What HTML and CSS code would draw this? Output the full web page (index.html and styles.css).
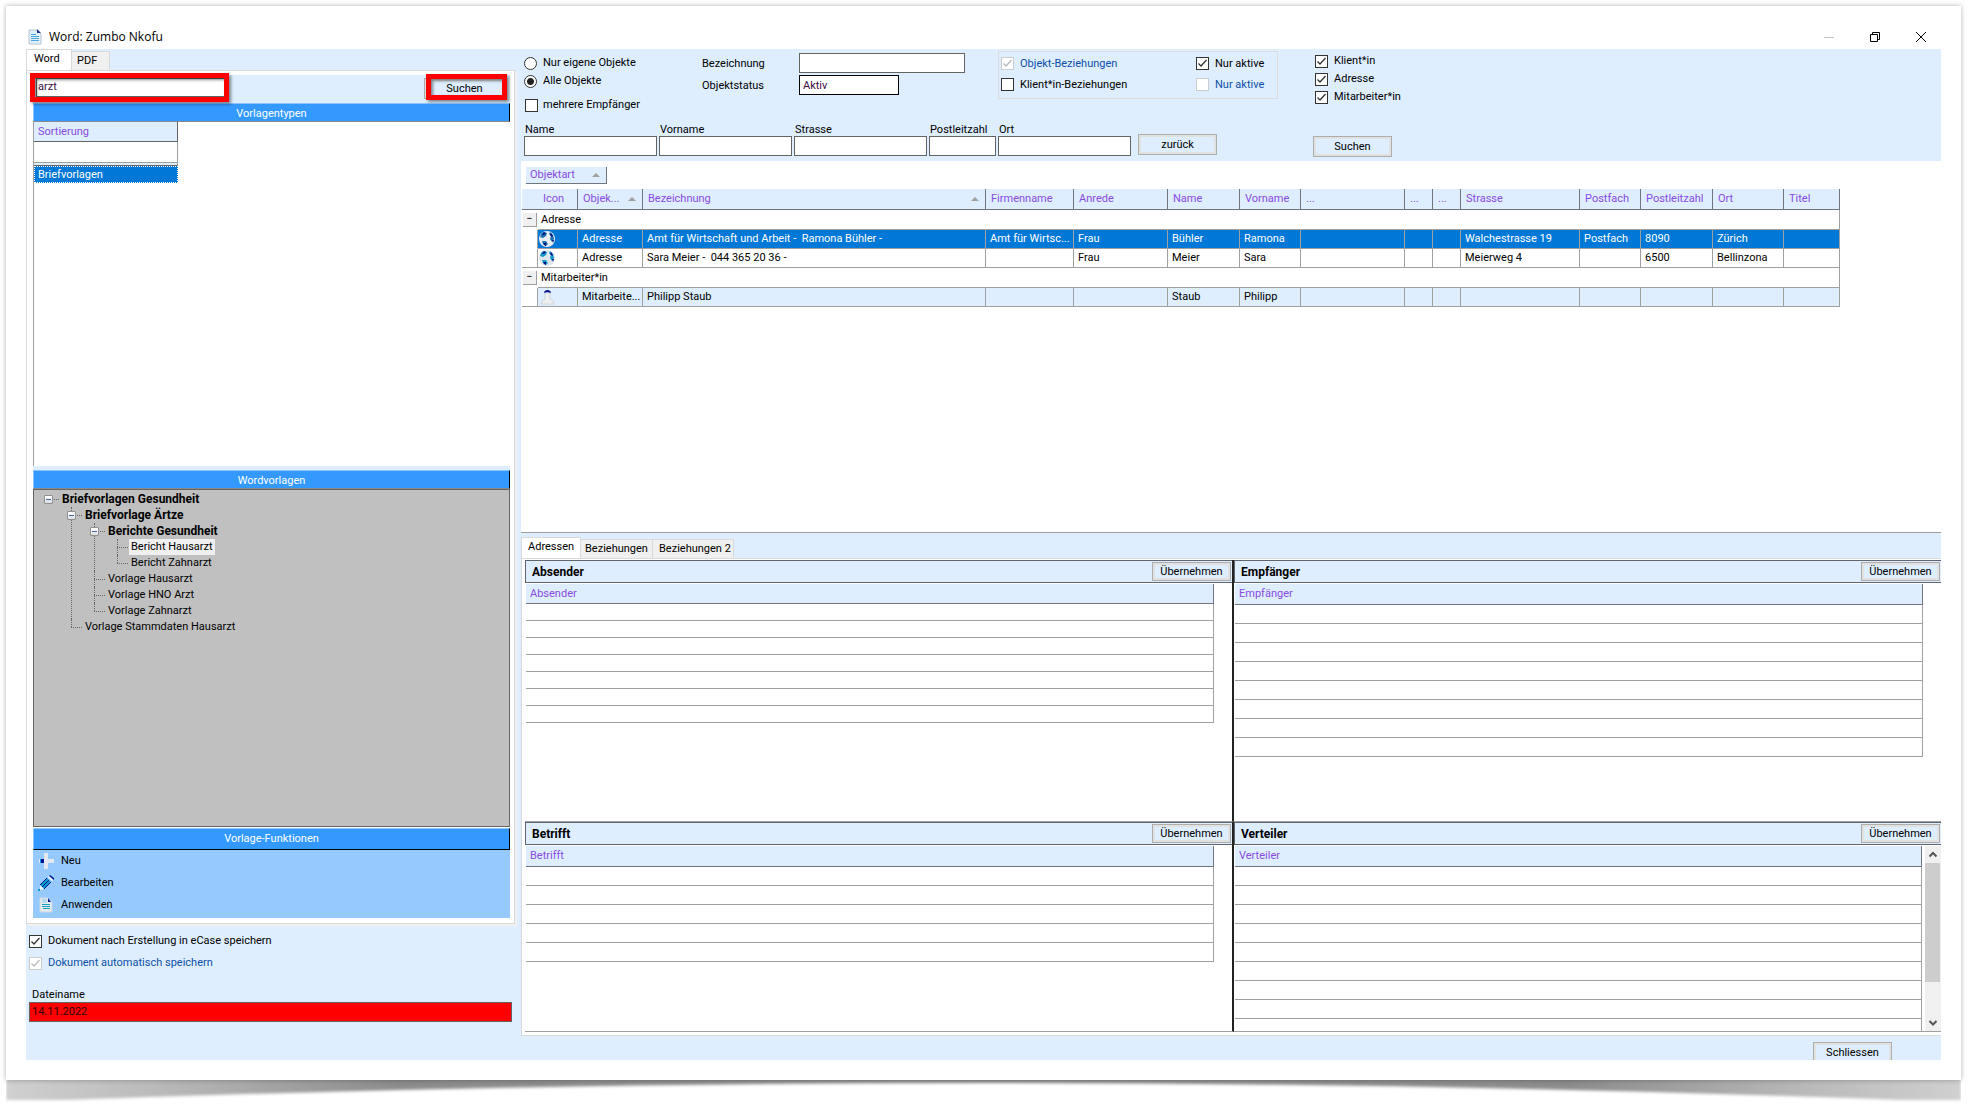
FILE: index.html
```html
<!DOCTYPE html>
<html lang="de">
<head>
<meta charset="utf-8">
<title>Word: Zumbo Nkofu</title>
<link rel="stylesheet" href="styles.css">
</head>
<body>
<div class="paper">
  <svg class="curl" viewBox="0 0 1955 28" preserveAspectRatio="none" aria-hidden="true">
    <defs>
      <linearGradient id="curl-fill" x1="0" x2="1" y1="0" y2="0">
        <stop offset="0" stop-color="#d0d0d0"/>
        <stop offset="0.07" stop-color="#bcbcbc"/>
        <stop offset="0.2" stop-color="#8c8c8c"/>
        <stop offset="0.5" stop-color="#909090"/>
        <stop offset="0.8" stop-color="#8c8c8c"/>
        <stop offset="0.93" stop-color="#bcbcbc"/>
        <stop offset="1" stop-color="#d0d0d0"/>
      </linearGradient>
      <filter id="curl-blur" x="-1%" width="102%" y="-50%" height="200%"><feGaussianBlur stdDeviation="1.5"/></filter>
    </defs>
    <path d="M0-10H1955V20H1895Q977-14 60 20H0Z" fill="url(#curl-fill)" filter="url(#curl-blur)"/>
  </svg>
  <div class="window">
    <header class="titlebar">
      <svg class="app-icon" width="14" height="16" viewBox="0 0 14 16"><path d="M1 1h8l4 4v10H1z" fill="#dff0fb" stroke="#b5c3cf"/><path d="M9 0l4 4H9z" fill="#1a2f8f"/><path d="M3 5.500h5M3 7.500h8M3 9.500h8M3 11.500h8" stroke="#4aa5dc"/></svg>
      <h1 class="title">Word: Zumbo Nkofu</h1>
      <div class="window-buttons">
        <button class="win-btn" aria-label="Minimieren"><svg width="12" height="12" viewBox="0 0 12 12"><path d="M1 6.500h10" stroke="#c4c4c4"/></svg></button>
        <button class="win-btn" aria-label="Wiederherstellen"><svg width="12" height="12" viewBox="0 0 12 12"><path d="M1.500 3.500h7v7h-7zM3.500 3.500v-2h7v7h-2" fill="none" stroke="#000"/></svg></button>
        <button class="win-btn" aria-label="Schliessen"><svg width="12" height="12" viewBox="0 0 12 12"><path d="M1 1l10 10M11 1L1 11" stroke="#000"/></svg></button>
      </div>
    </header>

    <div class="content">
      <aside class="sidebar">
        <div class="tabs" role="tablist">
          <button class="tab tab-active" role="tab">Word</button>
          <button class="tab" role="tab">PDF</button>
        </div>
        <div class="template-panel">
          <div class="search">
            <input class="field search-field" type="text" value="arzt" aria-label="Vorlage suchen">
            <button class="btn search-btn">Suchen</button>
            <span class="mark mark-field"></span>
            <span class="mark mark-btn"></span>
          </div>
          <h2 class="bar">Vorlagentypen</h2>
          <div class="types">
            <table class="types-table">
              <thead><tr><th>Sortierung</th></tr></thead>
              <tbody>
                <tr class="types-filter"><td></td></tr>
                <tr class="types-selected"><td>Briefvorlagen</td></tr>
              </tbody>
            </table>
          </div>
          <div class="splitter"></div>
          <h2 class="bar">Wordvorlagen</h2>
          <div class="tree">
            <ul class="tree-root">
              <li><span class="toggle"></span><span class="node node-bold">Briefvorlagen Gesundheit</span>
                <ul>
                  <li><span class="toggle"></span><span class="node node-bold">Briefvorlage Ärtze</span>
                    <ul>
                      <li><span class="toggle"></span><span class="node node-bold">Berichte Gesundheit</span>
                        <ul>
                          <li><span class="node node-selected">Bericht Hausarzt</span></li>
                          <li><span class="node">Bericht Zahnarzt</span></li>
                        </ul>
                      </li>
                      <li><span class="node">Vorlage Hausarzt</span></li>
                      <li><span class="node">Vorlage HNO Arzt</span></li>
                      <li><span class="node">Vorlage Zahnarzt</span></li>
                    </ul>
                  </li>
                  <li><span class="node">Vorlage Stammdaten Hausarzt</span></li>
                </ul>
              </li>
            </ul>
          </div>
          <h2 class="bar bar-functions">Vorlage-Funktionen</h2>
          <div class="functions">
            <button class="function"><svg width="16" height="16" viewBox="0 0 16 16"><path d="M6 0h4v6h6v4h-6v6H6v-6H1V6h5z" fill="#e3e8f0"/><path d="M2 6h2v4H2z" fill="#0a9bd0"/><path d="M3 6h3v4H3z" fill="#00109a"/></svg>Neu</button>
            <button class="function"><svg width="16" height="16" viewBox="0 0 16 16"><path d="M9 3l4 4-7 7-4-4z" fill="#0a96cf"/><path d="M9 3L2 10M13 7l-7 7M11 5l-7 7" fill="none" stroke="#00168f"/><path d="M10 2l4 4 1-1-4-4z" fill="#fff"/><path d="M11 1l1-1 4 3v2z" fill="#00168f"/><path d="M2 10l4 4-4 1z" fill="#eef4fb"/><path d="M0 14h2v2H0z" fill="#0a96cf"/></svg>Bearbeiten</button>
            <button class="function"><svg width="16" height="16" viewBox="0 0 16 16"><path d="M2 1h8l4 4v10H2z" fill="#e6eaef" stroke="#cfd6de"/><path d="M4 2h5v4H4z" fill="#b5d8ec"/><path d="M10 1l3 4h-3z" fill="#00168f"/><path d="M4 7.500h8M4 9.500h8M5 11.500h7" stroke="#12a0bd"/></svg>Anwenden</button>
          </div>
        </div>
        <div class="save-options">
          <label class="option"><input type="checkbox" checked>Dokument nach Erstellung in eCase speichern</label>
          <label class="option option-disabled"><input type="checkbox" checked disabled>Dokument automatisch speichern</label>
          <label class="file-label" for="file">Dateiname</label>
          <input class="field file-field" id="file" type="text" value="14.11.2022">
        </div>
      </aside>

      <main class="main">
        <form class="filters">
          <div class="filter-row">
            <div class="scope">
              <label class="option"><input type="radio" name="scope">Nur eigene Objekte</label>
              <label class="option"><input type="radio" name="scope" checked>Alle Objekte</label>
              <label class="option option-multi"><input type="checkbox">mehrere Empfänger</label>
            </div>
            <div class="object-fields">
              <label for="desc">Bezeichnung</label><input class="field" id="desc" type="text">
              <label for="status">Objektstatus</label><input class="field status-field" id="status" type="text" value="Aktiv">
            </div>
            <fieldset class="relations">
              <label class="option option-disabled"><input type="checkbox" checked disabled>Objekt-Beziehungen</label>
              <label class="option"><input type="checkbox" checked>Nur aktive</label>
              <label class="option"><input type="checkbox">Klient*in-Beziehungen</label>
              <label class="option option-disabled"><input type="checkbox" disabled>Nur aktive</label>
            </fieldset>
            <div class="kinds">
              <label class="option"><input type="checkbox" checked>Klient*in</label>
              <label class="option"><input type="checkbox" checked>Adresse</label>
              <label class="option"><input type="checkbox" checked>Mitarbeiter*in</label>
            </div>
          </div>
          <div class="filter-row person-row">
            <label class="person-field">Name<input class="field" type="text"></label>
            <label class="person-field">Vorname<input class="field" type="text"></label>
            <label class="person-field">Strasse<input class="field" type="text"></label>
            <label class="person-field person-zip">Postleitzahl<input class="field" type="text"></label>
            <label class="person-field">Ort<input class="field" type="text"></label>
            <button class="btn back-btn" type="button">zurück</button>
            <button class="btn find-btn" type="button">Suchen</button>
          </div>
        </form>

        <section class="results">
          <button class="group-chip">Objektart<span class="sort"></span></button>
          <table class="grid">
            <colgroup><col class="w16"><col class="w40"><col class="w65"><col class="w343"><col class="w88"><col class="w94"><col class="w72"><col class="w61"><col class="w104"><col class="w28"><col class="w28"><col class="w119"><col class="w61"><col class="w72"><col class="w71"><col class="w56"></colgroup>
            <thead>
              <tr><th colspan="2" class="icon-head">Icon</th><th><span class="head">Objek...<span class="sort"></span></span></th><th><span class="head">Bezeichnung<span class="sort"></span></span></th><th>Firmenname</th><th>Anrede</th><th>Name</th><th>Vorname</th><th>...</th><th>...</th><th>...</th><th>Strasse</th><th>Postfach</th><th>Postleitzahl</th><th>Ort</th><th>Titel</th></tr>
            </thead>
            <tbody>
              <tr class="group"><td class="gutter"><button class="expander" aria-label="Gruppe schliessen">−</button></td><td colspan="15">Adresse</td></tr>
              <tr class="row row-selected"><td class="gutter"></td><td class="icon"><svg width="16" height="16" viewBox="0 0 16 16"><circle cx="8" cy="8" r="8" fill="#e9eef2"/><path d="M4 1l4 1-1 3-3 2-3-1 1-3zM11 1l3 3 1 4-2 3-2-3 1-3-2-2zM3 10l4 0 2 3-2 2-3-2z" fill="#1b6fae"/><path d="M5 1l2 1-2 2-2 0zM12 2l2 3-1 1-2-2zM4 12l3 0 0 3-2-1zM13 9l2 0-1 3z" fill="#03107a"/></svg></td><td>Adresse</td><td>Amt für Wirtschaft und Arbeit -&nbsp; Ramona Bühler -</td><td>Amt für Wirtsc...</td><td>Frau</td><td>Bühler</td><td>Ramona</td><td></td><td></td><td></td><td>Walchestrasse 19</td><td>Postfach</td><td>8090</td><td>Zürich</td><td></td></tr>
              <tr class="row row-last"><td class="gutter"></td><td class="icon"><svg width="16" height="16" viewBox="0 0 16 16"><circle cx="8" cy="8" r="8" fill="#dfe6ea"/><path d="M4 1l4 1-1 3-3 2-3-1 1-3zM11 1l3 3 1 4-2 3-2-3 1-3-2-2zM3 10l4 0 2 3-2 2-3-2z" fill="#1199c8"/><path d="M5 1l2 1-2 2-2 0zM12 2l2 3-1 1-2-2zM4 12l3 0 0 3-2-1zM13 9l2 0-1 3z" fill="#03108a"/></svg></td><td>Adresse</td><td>Sara Meier -&nbsp; 044 365 20 36 -</td><td></td><td>Frau</td><td>Meier</td><td>Sara</td><td></td><td></td><td></td><td>Meierweg 4</td><td></td><td>6500</td><td>Bellinzona</td><td></td></tr>
              <tr class="group"><td class="gutter"><button class="expander" aria-label="Gruppe schliessen">−</button></td><td colspan="15">Mitarbeiter*in</td></tr>
              <tr class="row row-alt row-last"><td class="gutter"></td><td class="icon"><svg width="16" height="16" viewBox="0 0 16 16"><path d="M2 15c0-3 2-4 4-5V4h5v6c2 1 4 2 4 5z" fill="#eceef0" stroke="#cfd3d8"/><path d="M5 4c0-4 7-4 7 0L8 3z" fill="#03108a"/></svg></td><td>Mitarbeite...</td><td>Philipp Staub</td><td></td><td></td><td>Staub</td><td>Philipp</td><td></td><td></td><td></td><td></td><td></td><td></td><td></td><td></td></tr>
            </tbody>
          </table>
        </section>

        <section class="recipients">
          <div class="tabs" role="tablist">
            <button class="tab tab-active tab-addresses" role="tab">Adressen</button>
            <button class="tab tab-relations" role="tab">Beziehungen</button>
            <button class="tab tab-relations2" role="tab">Beziehungen 2</button>
          </div>
          <div class="quads">
            <section class="quad quad-left">
              <div class="quad-head"><h2>Absender</h2><button class="btn">Übernehmen</button></div>
              <div class="quad-body"><table class="lines lines-tight"><thead><tr><th>Absender</th></tr></thead><tbody><tr><td></td></tr><tr><td></td></tr><tr><td></td></tr><tr><td></td></tr><tr><td></td></tr><tr><td></td></tr><tr><td></td></tr></tbody></table></div>
            </section>
            <section class="quad">
              <div class="quad-head"><h2>Empfänger</h2><button class="btn">Übernehmen</button></div>
              <div class="quad-body"><table class="lines"><thead><tr><th>Empfänger</th></tr></thead><tbody><tr><td></td></tr><tr><td></td></tr><tr><td></td></tr><tr><td></td></tr><tr><td></td></tr><tr><td></td></tr><tr><td></td></tr><tr><td></td></tr></tbody></table></div>
            </section>
            <section class="quad quad-left">
              <div class="quad-head"><h2>Betrifft</h2><button class="btn">Übernehmen</button></div>
              <div class="quad-body"><table class="lines"><thead><tr><th>Betrifft</th></tr></thead><tbody><tr><td></td></tr><tr><td></td></tr><tr><td></td></tr><tr><td></td></tr><tr><td></td></tr></tbody></table></div>
            </section>
            <section class="quad">
              <div class="quad-head"><h2>Verteiler</h2><button class="btn">Übernehmen</button></div>
              <div class="quad-body">
                <table class="lines"><thead><tr><th>Verteiler</th></tr></thead><tbody><tr><td></td></tr><tr><td></td></tr><tr><td></td></tr><tr><td></td></tr><tr><td></td></tr><tr><td></td></tr><tr><td></td></tr><tr><td></td></tr><tr><td></td></tr></tbody></table>
                <div class="scrollbar">
                  <svg width="16" height="17" viewBox="0 0 16 17"><path d="M4.500 10.500L8 7l3.500 3.500" fill="none" stroke="#555" stroke-width="2"/></svg>
                  <div class="scroll-track"><div class="scroll-thumb"></div></div>
                  <svg width="16" height="17" viewBox="0 0 16 17"><path d="M4.500 7L8 10.500 11.500 7" fill="none" stroke="#555" stroke-width="2"/></svg>
                </div>
              </div>
            </section>
          </div>
        </section>

        <footer class="footer"><button class="btn">Schliessen</button></footer>
      </main>
    </div>
  </div>
</div>
</body>
</html>
```
FILE: styles.css
```css
* { box-sizing: border-box; }

body {
  margin: 0;
  min-height: 100vh;
  display: flex;
  flex-direction: column;
  background: #fff;
  color: #000;
  font: 11px/16px Roboto, "Liberation Sans", sans-serif;
}

h1, h2 { margin: 0; font-weight: 400; }
button, input { font: inherit; color: inherit; margin: 0; padding: 0; }
table { border-collapse: separate; border-spacing: 0; table-layout: fixed; }
th, td { padding: 0; text-align: left; font-weight: 400; }

/* sheet with a curled shadow */
.paper {
  position: relative;
  flex: 1;
  display: flex;
  margin: 6px 14px 29px 6px;
  background: #fff;
  box-shadow: 0 0 5px rgba(0, 0, 0, 0.3);
}
.curl {
  position: absolute;
  left: 0;
  top: 100%;
  z-index: -1;
  width: 100%;
  height: 28px;
}
.window {
  flex: 1;
  display: flex;
  flex-direction: column;
  padding: 0 20px 20px;
  min-width: 0;
  background: #fff;
}

.titlebar {
  display: flex;
  align-items: center;
  height: 43px;
  padding: 18px 14px 0 2px;
}
.title {
  flex: 1;
  margin-left: 7px;
  font: 12px/16px "Open Sans", sans-serif;
}
.window-buttons { display: flex; gap: 34px; }
.win-btn { width: 12px; height: 12px; border: 0; background: none; }
.win-btn svg { display: block; }

.content {
  flex: 1;
  display: grid;
  grid-template-columns: 489px minmax(0, 1fr);
  column-gap: 6px;
  background: #deeeff;
  overflow: hidden;
}

/* shared controls */
.field {
  height: 20px;
  border: 1px solid #646464;
  border-radius: 0;
  padding: 0 3px;
  background: #fff;
  color: #3c0a46;
}
.btn {
  width: 79px;
  height: 21px;
  border: 1px solid #adadad;
  box-shadow: inset 0 0 0 2px #e1e1e1;
  background: #deeeff;
  line-height: 17px;
}
.option { display: flex; align-items: center; gap: 6px; }
.option-disabled { color: #0f4fa8; }
input[type="checkbox"], input[type="radio"] {
  appearance: none;
  flex: none;
  width: 13px;
  height: 13px;
  border: 1px solid #333;
  background: #fff;
}
input[type="checkbox"]:checked {
  background: #fff url("data:image/svg+xml,%3Csvg xmlns='http://www.w3.org/2000/svg' viewBox='0 0 11 11'%3E%3Cpath d='M1.500 5.500l2.500 2.500 5.500-6' fill='none' stroke='%23333' stroke-width='1.300'/%3E%3C/svg%3E");
}
input[type="checkbox"]:disabled { border-color: #ccc; }
input[type="checkbox"]:checked:disabled {
  background: #fff url("data:image/svg+xml,%3Csvg xmlns='http://www.w3.org/2000/svg' viewBox='0 0 11 11'%3E%3Cpath d='M1.500 5.500l2.500 2.500 5.500-6' fill='none' stroke='%23bbb' stroke-width='1.300'/%3E%3C/svg%3E");
}
input[type="radio"] { border-radius: 50%; }
input[type="radio"]:checked { background: #fff radial-gradient(circle, #222 3px, transparent 4px); }

.tabs { display: flex; align-items: flex-end; height: 21px; }
.tab {
  height: 19px;
  width: 38px;
  border: 1px solid #d9d9d9;
  border-width: 1px 1px 0 0;
  background: #f0f0f0;
  text-align: left;
  padding-left: 5px;
}
.tab-active {
  height: 21px;
  width: 46px;
  padding: 0 0 2px 7px;
  border-left-width: 1px;
  background: #fff;
}
.tab-addresses { width: 60px; padding-left: 6px; }
.tab-relations { width: 72px; padding-left: 4px; }
.tab-relations2 { width: 81px; padding-left: 6px; }

/* left column */
.sidebar { display: flex; flex-direction: column; }
.template-panel {
  flex: 1;
  display: flex;
  flex-direction: column;
  padding: 4px 4px 5px 6px;
  border: 1px solid #d9d9d9;
  background: #fff;
  box-shadow: 2px 2px 0 #f0f0f0;
}
.search {
  position: relative;
  display: flex;
  justify-content: space-between;
  height: 28px;
  padding: 3px 5px 0 3px;
  background: #deeeff;
}
.search-field { width: 190px; height: 19px; padding: 0 1px 2px; }
.search-btn { width: 81px; }
.mark {
  position: absolute;
  border: 5px solid #f00;
  box-shadow: 2px 2px 3px rgba(0, 0, 0, 0.45), inset 2px 2px 3px rgba(0, 0, 0, 0.45);
  pointer-events: none;
}
.mark-field { left: -3px; top: -2px; width: 199px; height: 29px; }
.mark-btn { right: 3px; top: -1px; width: 81px; height: 26px; }

.bar {
  height: 19px;
  border: 1px solid #8cc4ff;
  border-right: 1px solid #000;
  border-bottom-color: #8a8a8a;
  background: #39f;
  color: #fff;
  font-size: 11px;
  line-height: 19px;
  text-align: center;
}
.bar-functions { height: 22px; margin-top: 1px; border-bottom-color: #000; line-height: 20px; }

.types { flex: 343 1 0; border-left: 1px solid #a0a0a0; }
.types-table { width: 144px; }
.types-table th, .types-table td { padding-left: 4px; border-right: 1px solid #a0a0a0; }
.types-table th {
  height: 20px;
  border-right-color: #646464;
  border-bottom: 1px solid #646464;
  background: #deeeff;
  color: #8a4be0;
}
.types-filter td { height: 24px; border-bottom: 1px solid #646464; background: linear-gradient(#fff 20px, #a0a0a0 20px, #a0a0a0 21px, #deeeff 21px); }
.types-table .types-selected td { height: 17px; padding-left: 3px; border: 1px dotted #fff; background: #0078d7; color: #fff; line-height: 15px; }
.splitter { height: 4px; background: #deeeff; }

.tree { flex: 335 1 0; padding: 1px 0 0 15px; border: 1px solid #646464; background: #c0c0c0; }
.tree ul { margin: 0; padding: 0 0 0 23px; list-style: none; }
.tree .tree-root { padding: 0; }
.tree li { position: relative; }
.tree li::before {
  content: "";
  position: absolute;
  left: -1px;
  top: 0;
  bottom: 0;
  border-left: 1px dotted #666;
}
.tree li:last-child::before { bottom: auto; height: 8px; }
.tree .tree-root > li::before { display: none; }
.node { display: block; position: relative; width: max-content; height: 16px; margin-left: 11px; padding: 0 2px; line-height: 16px; }
.node::before {
  content: "";
  position: absolute;
  left: -12px;
  top: 8px;
  width: 11px;
  border-top: 1px dotted #666;
}
.node-bold { font-size: 12px; font-weight: 700; }
.node-selected { background: #f0f0f0; }
.toggle {
  position: absolute;
  z-index: 1;
  left: -5px;
  top: 4px;
  width: 9px;
  height: 9px;
  border: 1px solid #919191;
  border-radius: 1px;
  background: linear-gradient(#4b63a7, #4b63a7) center / 5px 1px no-repeat, linear-gradient(#fff, #ddd);
}

.functions { display: flex; flex-direction: column; height: 68px; background: #96caff; }
.function { display: flex; align-items: center; gap: 7px; height: 22px; padding-left: 5px; border: 0; background: none; }

.save-options { display: flex; flex-direction: column; height: 136px; padding: 6px 3px 0; }
.save-options .option { height: 22px; }
.file-label { margin: 14px 0 0 3px; line-height: 14px; }
.file-field { height: 20px; background: #f00; color: #300; padding: 0 2px 2px; }

/* filters */
.main { display: grid; grid-template-rows: auto 372fr 503fr auto; min-width: 0; }
.filters { padding: 1px 0 4px; }
.filter-row { display: flex; padding-left: 3px; }
.scope { width: 175px; padding-top: 4px; }
.scope .option { height: 18px; }
.scope .option-multi { margin-top: 6px; padding-left: 1px; gap: 5px; }
.object-fields {
  display: grid;
  grid-template-columns: 100px 166px;
  grid-auto-rows: 20px;
  gap: 2px 0;
  width: 299px;
  padding-top: 3px;
}
.object-fields label { padding: 3px 0 0 3px; }
.status-field { width: 100px; border-color: #000; }
.relations {
  display: grid;
  grid-template-columns: 195px 1fr;
  grid-auto-rows: 21px;
  width: 280px;
  height: 48px;
  min-width: 0;
  margin: 1px 37px 0 0;
  padding: 1px 2px;
  border: 1px solid #dcdcdc;
}
.kinds { height: 73px; padding-top: 2px; }
.kinds .option { height: 18px; }
.person-row { align-items: flex-end; gap: 2px; }
.person-field { display: flex; flex-direction: column; width: 133px; padding-bottom: 1px; line-height: 13px; text-indent: 1px; }
.person-zip { width: 67px; }
.back-btn { margin: 0 0 2px 5px; }
.find-btn { margin-left: 94px; }

/* result list */
.results { background: #fff; border-bottom: 1px solid #a0a0a0; padding: 6px 0 0 1px; overflow: hidden; }
.group-chip {
  display: flex;
  justify-content: space-between;
  align-items: center;
  width: 81px;
  height: 17px;
  margin: 0 0 5px 4px;
  padding: 0 6px 0 4px;
  border: solid #70757f;
  border-width: 0 1px 1px 0;
  background: #deeeff;
  color: #8a4be0;
}
.sort { width: 0; border: solid transparent; border-width: 0 4px 4px; border-bottom-color: #a0a0a0; }
.grid { width: 1318px; }
.grid td, .grid th { padding-left: 4px; white-space: nowrap; overflow: hidden; line-height: 16px; }
.grid th { height: 21px; border: solid #70757f; border-width: 0 1px 1px 0; background: #deeeff; color: #8a4be0; padding-left: 5px; }
.grid .icon-head { padding-left: 21px; }
.head { display: flex; justify-content: space-between; align-items: center; padding-right: 6px; }
.group td { height: 20px; border-right: 1px solid #a0a0a0; border-bottom: 1px solid #a0a0a0; padding-left: 3px; }
.row td { height: 19px; border: solid #a0a0a0; border-width: 0 1px 1px 0; }
.row-selected td { background: #0078d7; color: #fff; }
.row-alt td { background: #deeeff; }
.grid .gutter { padding: 0; background: #fff; border-bottom-color: transparent; }
.grid .group .gutter { border-color: transparent; }
.grid .row-last .gutter { border-bottom-color: #a0a0a0; }
.grid .icon { padding-left: 1px; }
.icon svg { display: block; }
.expander {
  display: block;
  width: 14px;
  height: 14px;
  margin-left: 1px;
  border: solid #a0a0a0;
  border-width: 0 1px 1px 0;
  background: #f0f0f0;
  line-height: 12px;
}
.w16 { width: 16px; } .w28 { width: 28px; } .w40 { width: 40px; } .w56 { width: 56px; }
.w61 { width: 61px; } .w65 { width: 65px; } .w71 { width: 71px; } .w72 { width: 72px; }
.w88 { width: 88px; } .w94 { width: 94px; } .w104 { width: 104px; } .w119 { width: 119px; }
.w343 { width: 343px; }

/* recipient lists */
.recipients { display: flex; flex-direction: column; padding-top: 4px; min-height: 0; }
.quads {
  flex: 1;
  display: grid;
  grid-template-columns: 709fr 707fr;
  grid-template-rows: 264fr 211fr;
  padding: 1px 0 3px 3px;
  border: solid #d9d9d9;
  border-width: 1px 0 1px 1px;
  background: #fff;
  min-height: 0;
}
.quad { display: flex; flex-direction: column; min-height: 0; border-bottom: 1px solid #a0a0a0; }
.quad-left { border-right: 2px solid #222; }
.quad-head {
  display: flex;
  align-items: center;
  justify-content: space-between;
  height: 23px;
  padding: 0 1px 0 6px;
  border: 1px solid #60656f;
  border-right: 0;
  background: #deeeff;
}
.quad-head h2 { font-size: 12px; font-weight: 700; }
.quad-head .btn { height: 19px; line-height: 15px; }
.quad-body { flex: 1 1 0; display: flex; align-items: flex-start; gap: 3px; min-height: 0; padding: 1px 0 0 1px; overflow: hidden; }
.lines { flex: 1; margin-right: 18px; }
.lines:not(:last-child) { margin-right: 0; }
.lines th { height: 21px; padding-left: 4px; border: solid #70757f; border-width: 0 1px 1px 0; background: #deeeff; color: #8a4be0; }
.lines td { height: 19px; border: solid #a0a0a0; border-width: 0 1px 1px 0; }
.lines-tight th { height: 20px; }
.lines-tight td { height: 17px; }
.scrollbar { align-self: stretch; display: flex; flex-direction: column; width: 16px; background: #f0f0f0; }
.scrollbar svg { flex: none; }
.scroll-track { flex: 1; }
.scroll-thumb { height: 79%; margin-right: 1px; background: #cdcdcd; }

.footer { display: flex; justify-content: flex-end; height: 24px; padding: 6px 49px 0 0; overflow: hidden; }
```
